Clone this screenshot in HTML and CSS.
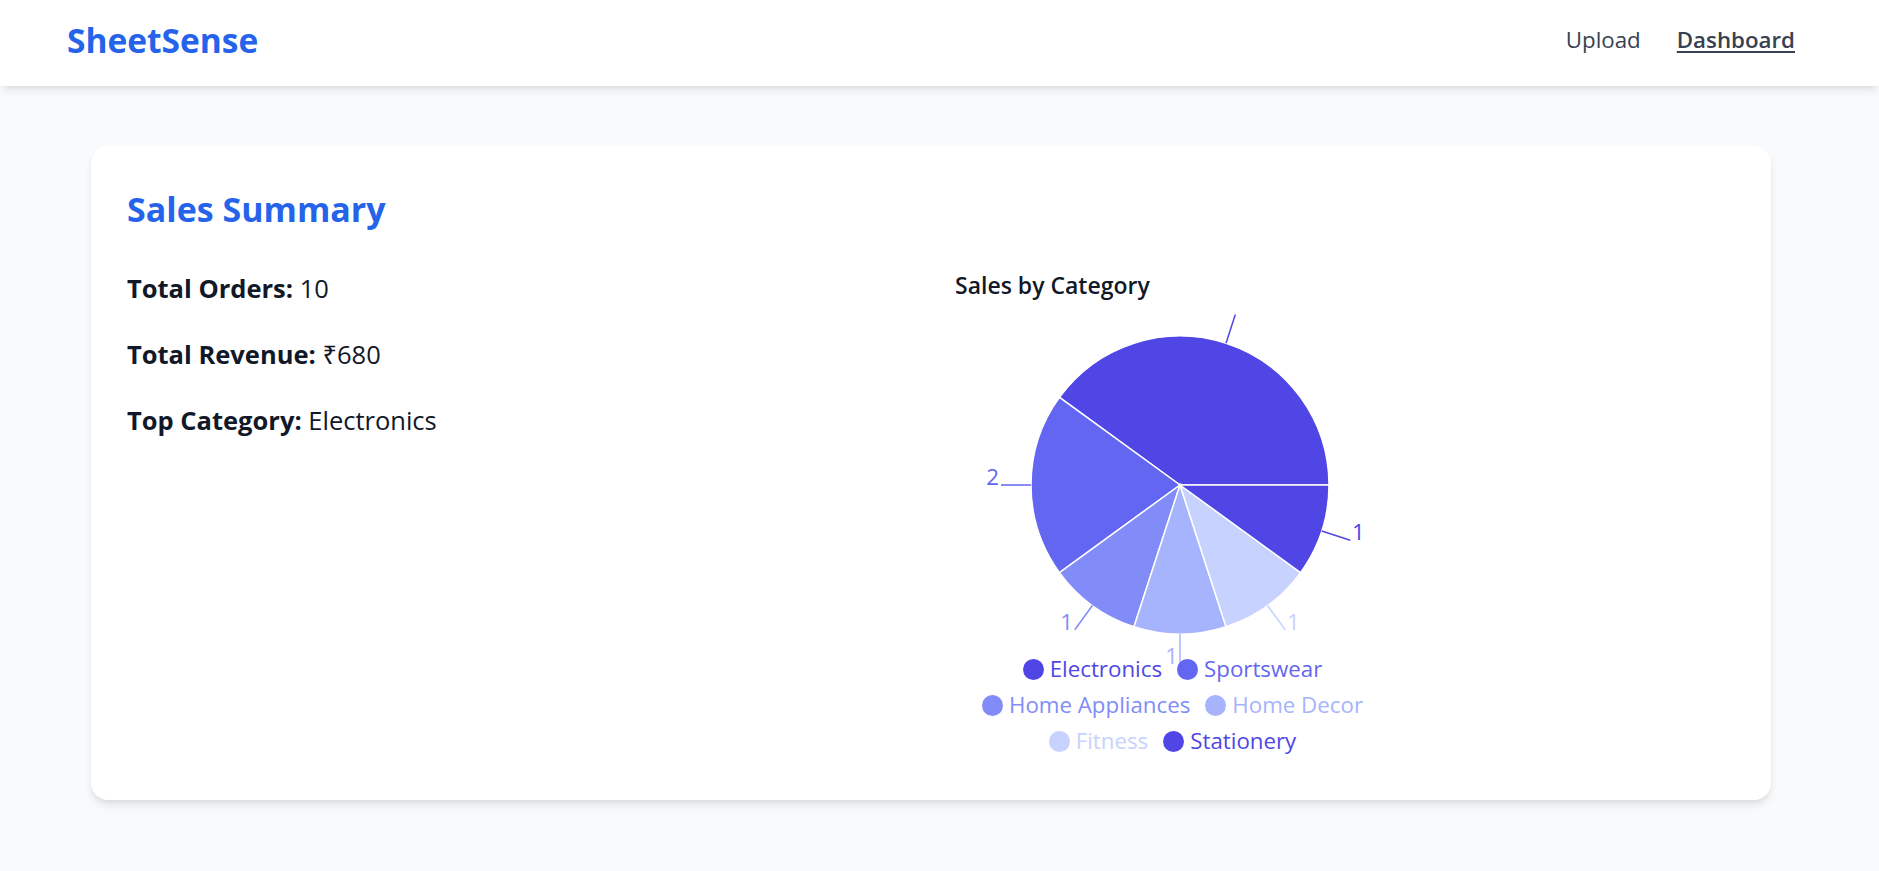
FILE: index.html
```html
<!DOCTYPE html>
<html lang="en">
<head>
<meta charset="utf-8">
<title>SheetSense – Dashboard</title>
<link rel="stylesheet" href="styles.css">
</head>
<body>
<header class="topbar">
  <div class="logo">SheetSense</div>
  <nav class="nav">
    <a class="nav-link" href="#">Upload</a>
    <a class="nav-link active" href="#">Dashboard</a>
  </nav>
</header>

<main class="page">
  <section class="card">
    <h2 class="card-title">Sales Summary</h2>
    <div class="grid">
      <div class="stats">
        <p class="stat"><strong>Total Orders:</strong> 10</p>
        <p class="stat"><strong>Total Revenue:</strong> ₹680</p>
        <p class="stat"><strong>Top Category:</strong> Electronics</p>
      </div>
      <div class="chart">
        <h3 class="chart-title">Sales by Category</h3>
        <svg class="pie" width="450" height="336" viewBox="0 0 450 336">
          <g class="slices">
            <path d="M225,170 L374,170 A149,149 0 0,0 104.46,82.42 Z" fill="#4f46e5"/>
            <path d="M225,170 L104.46,82.42 A149,149 0 0,0 104.46,257.58 Z" fill="#6366f1"/>
            <path d="M225,170 L104.46,257.58 A149,149 0 0,0 178.96,311.71 Z" fill="#818cf8"/>
            <path d="M225,170 L178.96,311.71 A149,149 0 0,0 271.04,311.71 Z" fill="#a5b4fc"/>
            <path d="M225,170 L271.04,311.71 A149,149 0 0,0 345.54,257.58 Z" fill="#c7d2fe"/>
            <path d="M225,170 L345.54,257.58 A149,149 0 0,0 374,170 Z" fill="#4f46e5"/>
          </g>
          <g class="label-lines">
            <line x1="271.04" y1="28.29" x2="280.31" y2="-0.5" stroke="#4f46e5"/>
            <line x1="76" y1="170" x2="46" y2="170" stroke="#6366f1"/>
            <line x1="137.42" y1="290.54" x2="119.79" y2="314.81" stroke="#818cf8"/>
            <line x1="225" y1="319" x2="225" y2="349" stroke="#a5b4fc"/>
            <line x1="312.58" y1="290.54" x2="330.21" y2="314.81" stroke="#c7d2fe"/>
            <line x1="366.71" y1="216.04" x2="395.24" y2="225.31" stroke="#4f46e5"/>
          </g>
          <g class="labels">
            <text x="44" y="170" text-anchor="end" fill="#6366f1">2</text>
            <text x="118" y="314.8" text-anchor="end" fill="#818cf8">1</text>
            <text x="223" y="349" text-anchor="end" fill="#a5b4fc">1</text>
            <text x="332" y="314.8" text-anchor="start" fill="#c7d2fe">1</text>
            <text x="397" y="225.3" text-anchor="start" fill="#4f46e5">1</text>
          </g>
        </svg>
        <div class="legend">
          <div class="legend-row">
            <span class="legend-item c1"><i class="dot"></i>Electronics</span>
            <span class="legend-item c2"><i class="dot"></i>Sportswear</span>
          </div>
          <div class="legend-row">
            <span class="legend-item c3"><i class="dot"></i>Home Appliances</span>
            <span class="legend-item c4"><i class="dot"></i>Home Decor</span>
          </div>
          <div class="legend-row">
            <span class="legend-item c5"><i class="dot"></i>Fitness</span>
            <span class="legend-item c1"><i class="dot"></i>Stationery</span>
          </div>
        </div>
      </div>
    </div>
  </section>
</main>
</body>
</html>
```

FILE: styles.css
```css
* { box-sizing: border-box; }

html, body {
  margin: 0;
  padding: 0;
}

body {
  background: #f9fafb;
  font-family: "Open Sans", "Noto Sans", "Liberation Sans", sans-serif;
  color: #111827;
  min-height: 871px;
}

.topbar {
  height: 86px;
  background: #ffffff;
  display: flex;
  justify-content: space-between;
  align-items: center;
  padding: 16px 84px 22px 67px;
  box-shadow: 0 6px 9px -1.5px rgba(0, 0, 0, 0.08), 0 3px 6px -3px rgba(0, 0, 0, 0.08);
  position: relative;
}

.logo {
  font-size: 33.5px;
  line-height: 48px;
  font-weight: 700;
  color: #2563eb;
}

.nav {
  display: flex;
  gap: 36px;
  align-items: center;
}

.nav-link {
  font-size: 22.3px;
  line-height: 36px;
  color: #374151;
  text-decoration: none;
}

.nav-link.active {
  font-weight: 600;
  text-decoration: underline;
  text-decoration-thickness: 2px;
  text-underline-offset: 3px;
}

.page {
  padding: 60px 108px 60px 91px;
}

.card {
  background: #ffffff;
  border-radius: 17px;
  padding: 36px 36px 41px;
  box-shadow: 0 6px 9px -1.5px rgba(0, 0, 0, 0.09), 0 3px 6px -3px rgba(0, 0, 0, 0.08);
}

.card-title {
  margin: 3px 0 34px;
  font-size: 34px;
  line-height: 48px;
  font-weight: 700;
  color: #2563eb;
}

.grid {
  display: grid;
  grid-template-columns: 1fr 1fr;
  gap: 48px;
}

.stats {
  display: flex;
  flex-direction: column;
  gap: 24px;
}

.stat {
  margin: 0;
  font-size: 25.5px;
  line-height: 42px;
  color: #111827;
}

.stat strong {
  font-weight: 700;
}

.chart {
  width: 450px;
  display: flex;
  flex-direction: column;
}

.chart-title {
  margin: 0 0 12px;
  font-size: 23px;
  line-height: 36px;
  font-weight: 600;
  color: #111827;
}

.pie {
  display: block;
  overflow: visible;
}

.slices path {
  stroke: #ffffff;
  stroke-width: 1.5;
}

.label-lines line {
  stroke-width: 1.5;
}

.labels text {
  font-family: "Open Sans", "Noto Sans", sans-serif;
  font-size: 22.3px;
}

.legend {
  display: flex;
  flex-direction: column;
}

.legend-row {
  display: flex;
  justify-content: center;
  height: 36px;
  align-items: center;
}

.legend-item {
  display: inline-flex;
  align-items: center;
  gap: 6px;
  margin-right: 15px;
  font-size: 22.3px;
  line-height: 36px;
}

.dot {
  width: 21px;
  height: 21px;
  border-radius: 50%;
  background: currentColor;
  display: inline-block;
}

.c1 { color: #4f46e5; }
.c2 { color: #6366f1; }
.c3 { color: #818cf8; }
.c4 { color: #a5b4fc; }
.c5 { color: #c7d2fe; }
```
